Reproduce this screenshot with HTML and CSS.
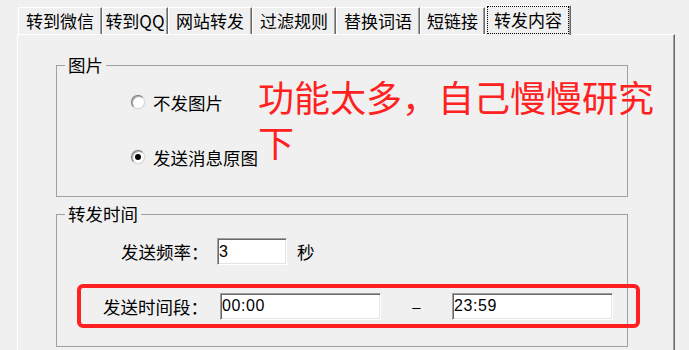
FILE: index.html
```html
<!DOCTYPE html>
<html lang="zh-CN">
<head>
  <meta charset="UTF-8">
  <title>转发内容</title>
  <link rel="stylesheet" href="styles.css">
</head>
<body>
  <!-- 选项卡 -->
  <div class="tabs">
    <div class="tab">转到微信</div>
    <div class="tab qq">转到QQ</div>
    <div class="tab">网站转发</div>
    <div class="tab">过滤规则</div>
    <div class="tab">替换词语</div>
    <div class="tab short">短链接</div>
    <div class="tab active"><span class="focus">转发内容</span></div>
  </div>

  <div class="panel">
    <!-- 图片 -->
    <fieldset class="group">
      <legend>图片</legend>
      <div class="radios">
        <div class="radio-row"><span class="radio"></span>不发图片</div>
        <div class="radio-row"><span class="radio checked"></span>发送消息原图</div>
      </div>
    </fieldset>

    <!-- 转发时间 -->
    <fieldset class="group time-group">
      <legend>转发时间</legend>
      <div class="row freq">
        <label class="label">发送频率：</label>
        <input type="text" class="field small" value="3">
        <span class="unit">秒</span>
      </div>
      <div class="row highlight">
        <label class="label">发送时间段：</label>
        <input type="text" class="field wide mono" value="00:00">
        <span class="dash">–</span>
        <input type="text" class="field wide mono" value="23:59">
      </div>
    </fieldset>
  </div>

  <div class="note">功能太多，自己慢慢研究下</div>
</body>
</html>
```

FILE: styles.css
```css
html, body {
  margin: 0;
  padding: 0;
  background: #f0f0f0;
}

body {
  position: relative;
  width: 689px;
  height: 350px;
  overflow: hidden;
  font-family: "Noto Sans CJK SC", sans-serif;
  font-size: 17.5px;
  color: #000;
}

.tabs {
  display: flex;
  align-items: flex-end;
  height: 29px;
  margin: 5px 0 0 18px;
  font-size: 17px;
}

.tab {
  box-sizing: border-box;
  width: 84px;
  height: 27px;
  border-top: 1px solid #fff;
  border-left: 1px solid #fff;
  border-right: 1px solid #696969;
  box-shadow: inset -1px 0 #a0a0a0;
  display: flex;
  align-items: center;
  justify-content: center;
  line-height: 20px;
  white-space: nowrap;
}

.tab.qq {
  width: 66px;
}

.tab.short {
  width: 65px;
}

.tab.active {
  position: relative;
  z-index: 1;
  width: 86px;
  height: 30px;
  margin-bottom: -1px;
  padding: 0 1px 1px 1px;
  background: #f0f0f0;
}

.focus {
  box-sizing: border-box;
  flex: 1;
  height: 100%;
  border: 1px dotted #000;
  display: flex;
  align-items: center;
  justify-content: center;
}

.panel {
  box-sizing: border-box;
  width: 658px;
  height: 330px;
  margin-left: 17px;
  padding: 20px 0 0 38px;
  border-top: 1px solid #fff;
  border-left: 1px solid #fff;
  border-right: 1px solid #696969;
  box-shadow: inset -1px 0 #a0a0a0;
}

.group {
  box-sizing: border-box;
  width: 572px;
  margin: 0;
  padding: 0;
  border: 1px solid #a0a0a0;
  min-inline-size: 0;
}

.group legend {
  margin-left: 8px;
  padding: 0 3px;
  line-height: 20px;
}

.radios {
  padding: 15px 0 27px 74px;
}

.radio-row {
  display: flex;
  align-items: center;
  gap: 8px;
  height: 24px;
}

.radio-row + .radio-row {
  margin-top: 31px;
}

.radio {
  box-sizing: border-box;
  flex: none;
  width: 14px;
  height: 14px;
  border-radius: 50%;
  border: 1px solid;
  border-color: #7a7a7a #d8d8d8 #d8d8d8 #7a7a7a;
  background: #fff;
  box-shadow: inset 1px 1px #a8a8a8, 0 0 0 1px #e8e8e8;
  display: flex;
  align-items: center;
  justify-content: center;
}

.radio.checked::after {
  content: "";
  width: 6px;
  height: 6px;
  border-radius: 50%;
  background: #000;
}

.time-group {
  margin-top: 7px;
  padding-bottom: 18px;
}

.row {
  display: flex;
  align-items: center;
}

.label {
  flex: none;
  white-space: nowrap;
}

.freq {
  margin-top: 14px;
  padding-left: 64px;
  height: 27px;
}

.freq .label {
  width: 96px;
}

.unit {
  margin-left: 10px;
}

.field {
  box-sizing: border-box;
  flex: none;
  height: 27px;
  margin: 0;
  padding: 0 1px;
  background: #fff;
  border: 1px solid;
  border-color: #a0a0a0 #fff #fff #a0a0a0;
  box-shadow: inset 1px 1px #696969, inset -1px -1px #e3e3e3;
  font-family: "Liberation Sans", sans-serif;
  font-size: 16px;
  color: #000;
  outline: none;
}

.field.small {
  width: 70px;
}

.field.wide {
  width: 161px;
}

.field.mono {
  letter-spacing: 0.6px;
}

.highlight {
  box-sizing: border-box;
  width: 563px;
  height: 44px;
  margin: 19px 0 0 20px;
  padding-left: 22px;
  border: 4px solid #ff2020;
  border-radius: 6px;
}

.highlight .label {
  width: 117px;
}

.dash {
  flex: none;
  width: 71px;
  text-align: center;
  font-family: "Liberation Sans", sans-serif;
  font-size: 15px;
}

.note {
  position: absolute;
  left: 258px;
  top: 74px;
  width: 400px;
  font-size: 36px;
  line-height: 45px;
  color: #ff2020;
}
```
